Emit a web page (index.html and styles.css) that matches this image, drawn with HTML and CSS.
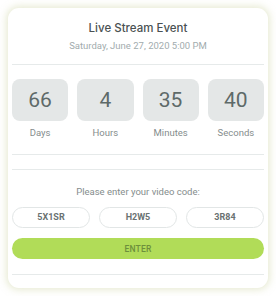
FILE: index.html
```html
<!DOCTYPE html>
<html>
	<head>
		<meta charset="utf-8" />
		<title>Live Stream Event</title>
		<link rel="stylesheet" href="styles.css">
	</head>
	<body>
		<div class="card">
			<div class="head">
				<h1 class="title">Live Stream Event</h1>
				<p class="date">Saturday, June 27, 2020 5:00 PM</p>
			</div>
			<div class="countdown">
				<div class="unit"><div class="num">66</div><span class="label">Days</span></div>
				<div class="unit"><div class="num">4</div><span class="label">Hours</span></div>
				<div class="unit"><div class="num">35</div><span class="label">Minutes</span></div>
				<div class="unit"><div class="num">40</div><span class="label">Seconds</span></div>
			</div>
			<div class="spacer"></div>
			<div class="code">
				<p class="prompt">Please enter your video code:</p>
				<div class="pills">
					<span class="pill">5X1SR</span>
					<span class="pill">H2W5</span>
					<span class="pill">3R84</span>
				</div>
				<button class="enter">ENTER</button>
			</div>
			<div class="foot"></div>
		</div>
	</body>
</html>
```

FILE: styles.css
```css
body {
	margin: 0;
	padding: 8px;
	background: #fff;
	font-family: Roboto, "Liberation Sans", sans-serif;
}

.card {
	width: 260px;
	height: 280px;
	box-sizing: border-box;
	padding: 0 4px;
	background: #fff;
	border-radius: 11px;
	box-shadow: 0 0 7px 2px rgba(210, 216, 170, 0.5);
	display: flex;
	flex-direction: column;
}

.head,
.countdown,
.spacer,
.code {
	border-bottom: 1px solid #e6eaea;
}

.head {
	height: 57px;
	box-sizing: border-box;
	padding-top: 13px;
	text-align: center;
}

.title {
	margin: 0;
	font-family: Inter, "Open Sans", sans-serif;
	font-size: 11.5px;
	font-weight: 500;
	color: #4a5152;
	line-height: 15px;
}

.date {
	margin: 3px 0 0;
	font-size: 9.5px;
	color: #a2acae;
	line-height: 13px;
}

.countdown {
	height: 90px;
	box-sizing: border-box;
	padding-top: 14px;
	display: grid;
	grid-template-columns: repeat(4, 1fr);
	column-gap: 9px;
}

.unit {
	display: flex;
	flex-direction: column;
	align-items: center;
}

.num {
	width: 100%;
	height: 42px;
	border-radius: 8px;
	background: #e4e7e7;
	color: #5e6a69;
	font-size: 21px;
	line-height: 42px;
	text-align: center;
}

.label {
	margin-top: 6px;
	font-size: 9.5px;
	color: #858d8d;
}

.spacer {
	height: 14px;
}

.code {
	height: 105px;
	box-sizing: border-box;
	padding-top: 16px;
}

.prompt {
	margin: 0;
	text-align: center;
	font-size: 9.5px;
	color: #858d8d;
	line-height: 12px;
}

.pills {
	margin-top: 9px;
	display: grid;
	grid-template-columns: repeat(3, 1fr);
	column-gap: 9px;
}

.pill {
	height: 21px;
	box-sizing: border-box;
	border: 1px solid #e2e6e6;
	border-radius: 11px;
	text-align: center;
	font-size: 9px;
	font-weight: 700;
	line-height: 19px;
	color: #6a7272;
}

.enter {
	display: block;
	width: 100%;
	height: 21px;
	margin-top: 10px;
	border: 0;
	border-radius: 11px;
	background: #b1dc58;
	color: #6d8f3c;
	font-family: inherit;
	font-size: 8.5px;
	font-weight: 500;
	letter-spacing: 0.2px;
}

.foot {
	flex: 1;
}
```
